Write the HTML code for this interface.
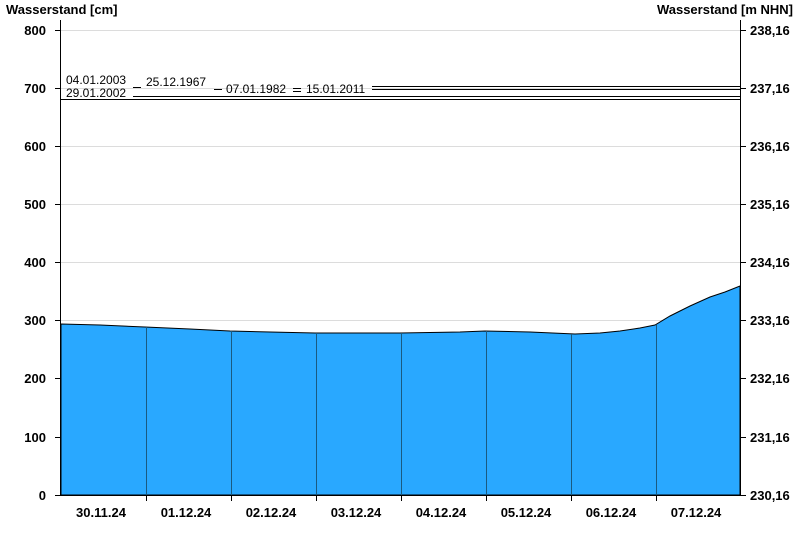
<!DOCTYPE html>
<html><head><style>body{margin:0;background:#fff}svg{display:block;font-family:"Liberation Sans",sans-serif}</style></head><body>
<svg width="800" height="550" viewBox="0 0 800 550">
<g font-size="13" font-weight="bold" fill="#000">
<text x="6" y="14">Wasserstand [cm]</text>
<text x="793" y="14" text-anchor="end">Wasserstand [m NHN]</text>
</g>
<g stroke="#dcdcdc" stroke-width="1">
<line x1="61" x2="740" y1="30.5" y2="30.5"/><line x1="61" x2="740" y1="88.5" y2="88.5"/>
<line x1="61" x2="740" y1="146.5" y2="146.5"/><line x1="61" x2="740" y1="204.5" y2="204.5"/>
<line x1="61" x2="740" y1="262.5" y2="262.5"/><line x1="61" x2="740" y1="320.5" y2="320.5"/>
<line x1="61" x2="740" y1="378.5" y2="378.5"/><line x1="61" x2="740" y1="437.5" y2="437.5"/>
</g>
<path d="M61,324 L100,325 L145,327 L190,329 L230,331 L270,332 L315,333 L400,333 L460,332 L485,331 L530,332 L575,334 L600,333 L620,331 L640,328 L655,325 L670,316 L690,306 L710,297 L725,292 L740,286 L740,495 L61,495 Z" fill="#29a8ff" stroke="#000" stroke-width="1"/>
<g stroke="#1a5a80" stroke-width="1">
<line x1="146.5" x2="146.5" y1="327" y2="495"/><line x1="231.5" x2="231.5" y1="331" y2="495"/>
<line x1="316.5" x2="316.5" y1="333" y2="495"/><line x1="401.5" x2="401.5" y1="333" y2="495"/>
<line x1="486.5" x2="486.5" y1="331" y2="495"/><line x1="571.5" x2="571.5" y1="334" y2="495"/>
<line x1="656.5" x2="656.5" y1="325" y2="495"/>
</g>
<g stroke="#000" stroke-width="1">
<line x1="372" x2="740" y1="86.5" y2="86.5"/><line x1="372" x2="740" y1="89.5" y2="89.5"/>
<line x1="133" x2="740" y1="96.5" y2="96.5"/><line x1="61" x2="740" y1="99.5" y2="99.5"/>
<line x1="133" x2="141" y1="87.5" y2="87.5"/><line x1="214" x2="222" y1="89.5" y2="89.5"/>
<line x1="293" x2="301" y1="88.5" y2="88.5"/><line x1="293" x2="301" y1="91.5" y2="91.5"/>
</g>
<g font-size="12" fill="#000">
<text x="66" y="84">04.01.2003</text><text x="66" y="97">29.01.2002</text>
<text x="146" y="86">25.12.1967</text><text x="226" y="93">07.01.1982</text><text x="306" y="93">15.01.2011</text>
</g>
<g stroke="#000" stroke-width="1">
<line x1="60.5" x2="60.5" y1="20" y2="495"/><line x1="740.5" x2="740.5" y1="20" y2="495"/>
<line x1="60" x2="741" y1="495.5" y2="495.5"/>
<path d="M55,30.5h6M55,88.5h6M55,146.5h6M55,204.5h6M55,262.5h6M55,320.5h6M55,378.5h6M55,437.5h6M55,495.5h6"/>
<path d="M740,30.5h6M740,88.5h6M740,146.5h6M740,204.5h6M740,262.5h6M740,320.5h6M740,378.5h6M740,437.5h6M740,495.5h6"/>
<path d="M146.5,495v6M231.5,495v6M316.5,495v6M401.5,495v6M486.5,495v6M571.5,495v6M656.5,495v6"/>
</g>
<g font-size="13" font-weight="bold" fill="#000" text-anchor="end">
<text x="46" y="35">800</text><text x="46" y="93">700</text><text x="46" y="151">600</text><text x="46" y="209">500</text>
<text x="46" y="267">400</text><text x="46" y="325">300</text><text x="46" y="383">200</text><text x="46" y="442">100</text><text x="46" y="500">0</text>
</g>
<g font-size="13" font-weight="bold" fill="#000">
<text x="750" y="35">238,16</text><text x="750" y="93">237,16</text><text x="750" y="151">236,16</text><text x="750" y="209">235,16</text>
<text x="750" y="267">234,16</text><text x="750" y="325">233,16</text><text x="750" y="383">232,16</text><text x="750" y="442">231,16</text><text x="750" y="500">230,16</text>
</g>
<g font-size="13" font-weight="bold" fill="#000" text-anchor="middle">
<text x="101" y="517">30.11.24</text><text x="186" y="517">01.12.24</text><text x="271" y="517">02.12.24</text><text x="356" y="517">03.12.24</text>
<text x="441" y="517">04.12.24</text><text x="526" y="517">05.12.24</text><text x="611" y="517">06.12.24</text><text x="696" y="517">07.12.24</text>
</g>
</svg>
</body></html>
